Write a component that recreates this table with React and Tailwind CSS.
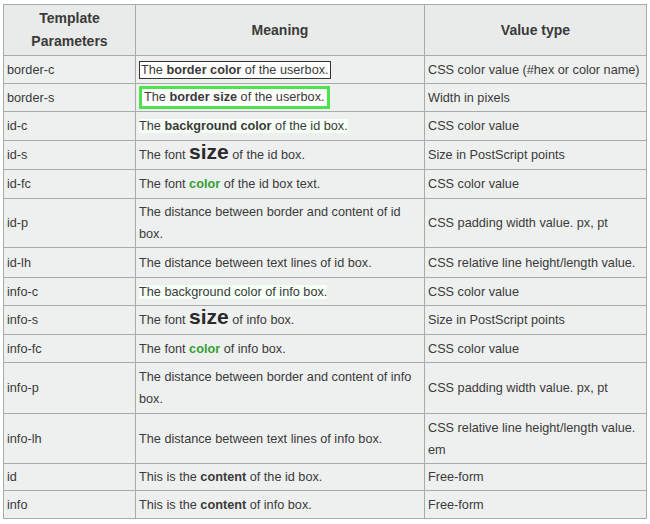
import React from "react";

const rows = [
  {
    key: "border-c",
    h: "h-[28px]",
    meaning: (
      <span className="inline-block border border-[#333] bg-white px-[1px] leading-[16px]">
        The <b>border color</b> of the userbox.
      </span>
    ),
    value: "CSS color value (#hex or color name)",
  },
  {
    key: "border-s",
    h: "h-[28px]",
    meaning: (
      <span className="inline-block border-[3px] border-[#4ee24e] bg-white px-[2px] leading-[17px]">
        The <b>border size</b> of the userbox.
      </span>
    ),
    value: "Width in pixels",
  },
  {
    key: "id-c",
    h: "h-[29px]",
    meaning: (
      <span className="bg-[#f6fff6]">
        The <b>background color</b> of the id box.
      </span>
    ),
    value: "CSS color value",
  },
  {
    key: "id-s",
    h: "h-[29px]",
    meaning: (
      <>
        The font <b className="text-[21px] leading-[16px] text-[#2a2a2a]">size</b> of the id box.
      </>
    ),
    value: "Size in PostScript points",
  },
  {
    key: "id-fc",
    h: "h-[29px]",
    meaning: (
      <>
        The font <b className="text-[#34a034]">color</b> of the id box text.
      </>
    ),
    value: "CSS color value",
  },
  {
    key: "id-p",
    h: "h-[49px]",
    meaning: "The distance between border and content of id box.",
    value: "CSS padding width value. px, pt",
  },
  {
    key: "id-lh",
    h: "h-[30px]",
    meaning: "The distance between text lines of id box.",
    value: "CSS relative line height/length value.",
  },
  {
    key: "info-c",
    h: "h-[28px]",
    meaning: <span className="bg-[#f6fff6]">The background color of info box.</span>,
    value: "CSS color value",
  },
  {
    key: "info-s",
    h: "h-[29px]",
    meaning: (
      <>
        The font <b className="text-[21px] leading-[16px] text-[#2a2a2a]">size</b> of info box.
      </>
    ),
    value: "Size in PostScript points",
  },
  {
    key: "info-fc",
    h: "h-[28px]",
    meaning: (
      <>
        The font <b className="text-[#34a034]">color</b> of info box.
      </>
    ),
    value: "CSS color value",
  },
  {
    key: "info-p",
    h: "h-[51px]",
    meaning: "The distance between border and content of info box.",
    value: "CSS padding width value. px, pt",
  },
  {
    key: "info-lh",
    h: "h-[50px]",
    meaning: "The distance between text lines of info box.",
    value: "CSS relative line height/length value. em",
  },
  {
    key: "id",
    h: "h-[27px]",
    meaning: (
      <>
        This is the <b>content</b> of the id box.
      </>
    ),
    value: "Free-form",
  },
  {
    key: "info",
    h: "h-[28px]",
    meaning: (
      <>
        This is the <b>content</b> of info box.
      </>
    ),
    value: "Free-form",
  },
];

const cell = "border border-[#a6aca9] px-[2px] py-[2px] align-middle";

export default function App() {
  return (
    <div className="w-[650px] h-[524px] bg-white pt-[4px] pl-[3px] font-['Liberation_Sans',Arial,sans-serif] text-[12.7px] leading-[22px] text-[#3a3a3a]">
      <table className="w-[643px] table-fixed border-collapse bg-[#eef0ef]">
        <colgroup>
          <col className="w-[132px]" />
          <col className="w-[289px]" />
          <col className="w-[222px]" />
        </colgroup>
        <thead>
          <tr className="h-[50px] bg-[#e9ebea]">
            <th className={`${cell} py-0 text-center text-[14px] font-bold leading-[23px]`}>
              Template
              <br />
              Parameters
            </th>
            <th className={`${cell} py-0 text-center text-[14px] font-bold`}>Meaning</th>
            <th className={`${cell} py-0 text-center text-[14px] font-bold`}>Value type</th>
          </tr>
        </thead>
        <tbody>
          {rows.map((r) => (
            <tr key={r.key} className={r.h}>
              <td className={`${cell} pl-[3px]`}>{r.key}</td>
              <td className={`${cell} pl-[3px]`}>{r.meaning}</td>
              <td className={`${cell} pl-[3px]`}>{r.value}</td>
            </tr>
          ))}
        </tbody>
      </table>
    </div>
  );
}
